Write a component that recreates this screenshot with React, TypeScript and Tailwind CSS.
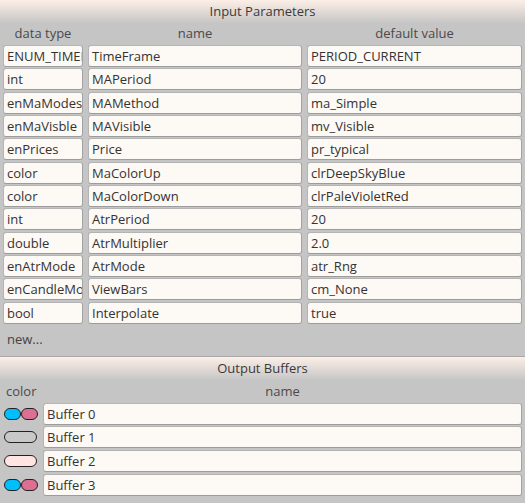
const params = [
  ["ENUM_TIMEFRAMES", "TimeFrame", "PERIOD_CURRENT"],
  ["int", "MAPeriod", "20"],
  ["enMaModes", "MAMethod", "ma_Simple"],
  ["enMaVisble", "MAVisible", "mv_Visible"],
  ["enPrices", "Price", "pr_typical"],
  ["color", "MaColorUp", "clrDeepSkyBlue"],
  ["color", "MaColorDown", "clrPaleVioletRed"],
  ["int", "AtrPeriod", "20"],
  ["double", "AtrMultiplier", "2.0"],
  ["enAtrMode", "AtrMode", "atr_Rng"],
  ["enCandleMode", "ViewBars", "cm_None"],
  ["bool", "Interpolate", "true"],
];

const buffers = [
  { name: "Buffer 0", colors: ["#00bfff", "#db7093"] },
  { name: "Buffer 1", colors: ["#c8c8c8"] },
  { name: "Buffer 2", colors: ["#ffe4e1"] },
  { name: "Buffer 3", colors: ["#00bfff", "#db7093"] },
];

function Field({ value }: { value: string }) {
  return (
    <div className="h-[22px] overflow-hidden whitespace-nowrap rounded-[3px] border border-[#b4b4b4] border-r-[#a2a2a2] border-b-[#9c9c9c] bg-[#fdf9f5] pl-[3px] text-[13px] leading-[20px] text-[#333]">
      {value}
    </div>
  );
}

function Swatch({ colors }: { colors: string[] }) {
  if (colors.length === 1) {
    return (
      <div className="h-[12px] w-[33px] rounded-full border border-[#222]" style={{ background: colors[0] }} />
    );
  }
  return (
    <div className="flex">
      {colors.map((c, i) => (
        <div key={i} className="h-[12px] w-[17px] rounded-full border border-[#222]" style={{ background: c }} />
      ))}
    </div>
  );
}

export default function App() {
  return (
    <div className="flex h-[503px] w-[525px] flex-col bg-[#c5c5c5] font-['Open_Sans',sans-serif] text-[13px] text-[#333]">
      <div className="flex h-[23px] items-center justify-center bg-gradient-to-b from-[#fdefe7] to-[#c6c6c6] text-[#3a3a3a]">
        Input Parameters
      </div>

      <div className="grid h-[22px] grid-cols-[80px_214px_215px] items-center gap-x-[5px] px-[3px] text-center text-[#4a4a4a]">
        <span>data type</span>
        <span>name</span>
        <span>default value</span>
      </div>

      <div className="flex flex-col gap-[1.35px] px-[3px]">
        {params.map((p, i) => (
          <div key={i} className="grid grid-cols-[80px_214px_215px] gap-x-[5px]">
            <Field value={p[0]} />
            <Field value={p[1]} />
            <Field value={p[2]} />
          </div>
        ))}
      </div>

      <div className="flex h-[33px] items-center border-b border-[#a9a9a9] pl-[7px] text-[#444]">new...</div>

      <div className="flex h-[23px] items-center justify-center bg-gradient-to-b from-[#fdefe7] to-[#c6c6c6] text-[#3a3a3a]">
        Output Buffers
      </div>

      <div className="flex h-[23px] items-center text-[#4a4a4a]">
        <span className="w-[43px] pl-[6px]">color</span>
        <span className="flex-1 pr-[3px] text-center">name</span>
      </div>

      <div className="flex flex-col gap-[1.6px]">
        {buffers.map((b, i) => (
          <div key={i} className="flex items-center">
            <div className="flex w-[43px] items-center pl-[4px]">
              <Swatch colors={b.colors} />
            </div>
            <div className="w-[479px]">
              <Field value={b.name} />
            </div>
          </div>
        ))}
      </div>
    </div>
  );
}
